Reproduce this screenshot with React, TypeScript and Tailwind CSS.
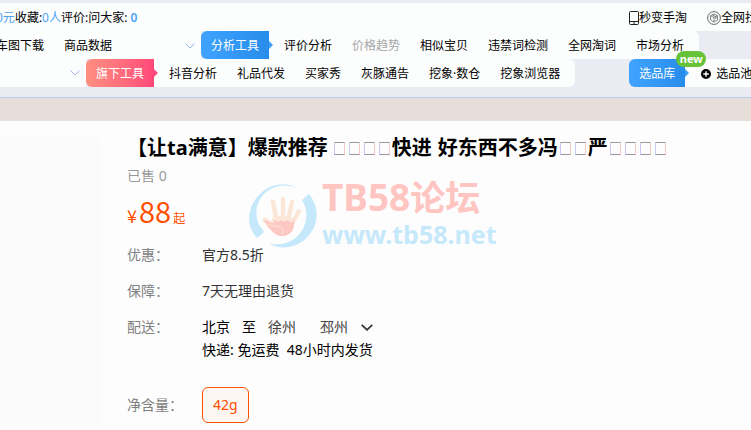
import type { ReactNode } from "react";

const analysisTools = [
  { label: "评价分析" },
  { label: "价格趋势", muted: true },
  { label: "相似宝贝" },
  { label: "违禁词检测" },
  { label: "全网淘词" },
  { label: "市场分析" },
];

const brandTools = [
  { label: "抖音分析" },
  { label: "礼品代发" },
  { label: "买家秀" },
  { label: "灰豚通告" },
  { label: "挖象·数仓" },
  { label: "挖象浏览器" },
];

type Tool = { label: string; muted?: boolean };

const ToolLinks = ({ items }: { items: Tool[] }) => (
  <nav className="flex h-7 shrink-0 items-center gap-5 rounded-r-md bg-[#fcfdfd] px-[15px] pt-[2px]">
    {items.map((item) => (
      <a
        key={item.label}
        href="#"
        className={item.muted ? "text-[#a6a6a6]" : "text-black"}
      >
        {item.label}
      </a>
    ))}
  </nav>
);

const Chevron = ({ className }: { className: string }) => (
  <svg viewBox="0 0 10 6" className={className} fill="none" stroke="currentColor">
    <path d="M0.5 0.7 L5 5 L9.5 0.7" />
  </svg>
);

const PhoneIcon = () => (
  <svg viewBox="0 0 10 14" className="h-[14px] w-[10px]" fill="none" stroke="#222">
    <rect x="0.5" y="0.5" width="9" height="13" rx="1" />
    <path d="M0.5 10.5 H9.5 M4 12 H6" />
  </svg>
);

const CubeIcon = () => (
  <svg viewBox="0 0 14 14" className="h-[14px] w-[14px]" fill="none" stroke="#555" strokeWidth="0.9">
    <circle cx="7" cy="7" r="6.4" />
    <path d="M7 3 L10.5 4.7 V9 L7 11 L3.5 9 V4.7 Z M3.5 4.7 L7 6.5 L10.5 4.7 M7 6.5 V11 M5.2 3.8 L8.8 5.6 V8" strokeWidth="0.7" />
  </svg>
);

const PlusIcon = () => (
  <svg viewBox="0 0 10 10" className="h-[10px] w-[10px]">
    <circle cx="5" cy="5" r="5" fill="#000" />
    <path d="M5 2.2 V7.8 M2.2 5 H7.8" stroke="#fff" strokeWidth="1.4" />
  </svg>
);

const HandLogo = () => (
  <svg viewBox="0 0 68 66" className="h-[66px] w-[68px] shrink-0">
    <path
      d="M50 6 C40 -1 24 -1 12 10 C-2 23 -4 42 8 55 L15 49 C14 46 9 43 8 35 C5 22 13 8 27 4 C36 1 43 3 50 6 Z"
      fill="#c5e8fb"
    />
    <path
      d="M60 11 C69 22 71 38 61 51 C52 64 34 68 20 61 C33 63 45 59 52 49 C58 40 60 28 53 17 Z"
      fill="#c5e8fb"
    />
    <g stroke="#fce6d8" strokeLinecap="round" fill="none">
      <path d="M28 39 L24 19" strokeWidth="4.4" />
      <path d="M34 37 L34 16" strokeWidth="4.4" />
      <path d="M39 38 L43 19" strokeWidth="4.4" />
      <path d="M43 41 L50 28" strokeWidth="4" />
      <path d="M22 42 L16 37" strokeWidth="5" />
    </g>
    <path
      d="M25 32 L45 35 C46 45 42 52 33 53 C26 53 22 48 20 43 Z"
      fill="#fce6d8"
    />
    <path
      d="M15 37 C19 37 22 41 25 40 L25 37 L29 39 L32 37 L35 39 L39 37 L42 40 L45 37 C46 46 43 52 34 53 C26 53 22 47 18 43 Z"
      fill="#fdc8c2"
    />
    <path d="M18 41 C25 44 35 42 34 48 L33 51" fill="none" stroke="#fce6d8" />
  </svg>
);

const Tofu = ({ count }: { count: number }) => (
  <span className="inline-flex gap-1 px-[2px]" aria-hidden="true">
    {Array(count)
      .fill("")
      .map((_, index) => (
        <span
          key={index}
          className="h-[13px] w-[11px] border border-y-[#999] border-l-[#c9c9f5] border-r-[#f5c9c9]"
        />
      ))}
  </span>
);

const Row = ({ label, children }: { label: string; children: ReactNode }) => (
  <div className="flex items-center">
    <dt className="w-[75px] shrink-0 text-[#808080]">{label}</dt>
    <dd>{children}</dd>
  </div>
);

const Toolbar = () => (
  <header className="border-b border-[#b5d3ee] bg-[#ebecf3] pt-[3px] pb-[10px] text-xs whitespace-nowrap">
    <div className="flex h-7 items-center bg-[#fcfdfd] pt-[2px]">
      <p className="-ml-1 w-[633px] shrink-0 text-black">
        <span className="text-[#4da3f5]">0元</span>收藏:
        <span className="text-[#4da3f5]">0人</span>评价:问大家:
        <span className="font-semibold text-[#4da3f5]"> 0</span>
      </p>
      <a href="#" className="flex shrink-0 items-center text-black">
        <PhoneIcon />
        秒变手淘
      </a>
      <a href="#" className="ml-5 flex shrink-0 items-center text-black">
        <CubeIcon />
        全网找
      </a>
    </div>

    <div className="flex h-7">
      <div className="flex w-[201px] shrink-0 items-center gap-5 bg-[#fcfdfd] pt-[2px]">
        <a href="#" className="-ml-1 text-black">车图下载</a>
        <a href="#" className="text-black">商品数据</a>
        <Chevron className="mr-[6px] ml-auto h-[6px] w-[10px] text-[#8ab4f0]" />
      </div>
      <div className="relative flex w-[68px] shrink-0 items-center justify-center rounded-l-md bg-linear-to-r from-[#3fa3ff] to-[#288ceb] pt-[2px] text-white">
        分析工具
        <span className="absolute top-[10px] left-full z-10 border-y-4 border-l-4 border-y-transparent border-l-[#3d9ff5]" />
      </div>
      <ToolLinks items={analysisTools} />
    </div>

    <div className="flex h-7">
      <div className="flex w-[86px] shrink-0 items-center justify-end bg-[#fcfdfd] pr-[6px]">
        <Chevron className="h-[6px] w-[10px] text-[#a9a9f5]" />
      </div>
      <div className="relative flex w-[68px] shrink-0 items-center justify-center rounded-l-md bg-linear-to-r from-[#ff8f80] to-[#ff4778] pt-[2px] text-white">
        旗下工具
        <span className="absolute top-[10px] left-full z-10 border-y-4 border-l-4 border-y-transparent border-l-[#ff4d80]" />
      </div>
      <ToolLinks items={brandTools} />
      <div className="relative ml-[54px] flex w-14 shrink-0 items-center justify-center rounded-l-md bg-linear-to-r from-[#3fa3ff] to-[#288ceb] pt-[2px] text-white">
        选品库
        <span className="absolute top-[10px] left-full z-10 border-y-4 border-l-4 border-y-transparent border-l-[#3d9ff5]" />
        <span className="absolute -top-2 left-[47px] z-10 flex h-4 w-[30px] items-center justify-center rounded-full bg-[#67c23a] text-[11px] font-bold">
          new
        </span>
      </div>
      <a href="#" className="flex flex-1 items-center gap-[5px] bg-[#fcfdfd] pt-[2px] pl-4 text-black">
        <PlusIcon />
        选品池
      </a>
    </div>
  </header>
);

const Watermark = () => (
  <div
    className="pointer-events-none absolute top-[43px] left-[122px] flex items-center gap-[5px] font-bold whitespace-nowrap"
    aria-hidden="true"
  >
    <HandLogo />
    <div>
      <p className="text-[37px] leading-9 text-[#fec5c1]">
        TB58<span className="text-[35px]">论坛</span>
      </p>
      <p className="text-[25px] leading-9 text-[#c5e8fb]">www.tb58.net</p>
    </div>
  </div>
);

const ProductInfo = () => (
  <section className="relative min-w-0 flex-1 text-sm">
    <Watermark />
    <h1 className="flex items-center text-xl leading-6 font-bold whitespace-nowrap text-black">
      【让ta满意】爆款推荐
      <span className="w-1" />
      <Tofu count={4} />
      快进
      <span className="w-[6px]" />
      好东西不多冯
      <Tofu count={2} />
      严
      <Tofu count={4} />
    </h1>
    <p className="mt-[6px] leading-5 text-[#999]">已售 0</p>
    <p className="mt-[6px] mb-[17px] flex h-9 items-baseline gap-[2px] font-['Noto_Sans_CJK_SC',sans-serif] text-[#ff5000]">
      <span className="text-lg leading-9">¥</span>
      <span className="text-[29px] leading-9">88</span>
      <span className="text-xs leading-9">起</span>
    </p>
    <dl className="flex flex-col gap-4 leading-5">
      <Row label="优惠：">
        <span className="text-[#333]">官方8.5折</span>
      </Row>
      <Row label="保障：">
        <span className="text-[#333]">7天无理由退货</span>
      </Row>
      <Row label="配送：">
        <div className="flex items-center gap-3 text-black">
          <span>北京</span>
          <span>至</span>
          <span className="mr-3 text-[#444]">徐州</span>
          <label className="relative flex items-center">
            <select
              aria-label="配送地区"
              className="w-[53px] appearance-none bg-transparent text-[#444] outline-none"
            >
              <option>邳州</option>
            </select>
            <Chevron className="pointer-events-none absolute right-0 h-[7px] w-3 stroke-[1.5] text-[#333]" />
          </label>
        </div>
      </Row>
    </dl>
    <p className="mt-[3px] ml-[75px] leading-5 whitespace-pre text-black">
      {"快递: 免运费  48小时内发货"}
    </p>
    <div className="mt-[27px] flex items-center">
      <span className="w-[75px] text-[#808080]">净含量：</span>
      <button
        type="button"
        className="h-9 rounded-md border border-[#ff5000] bg-[#fdf7f4] px-[10px] text-[#ff5000]"
      >
        42g
      </button>
    </div>
  </section>
);

const App = () => {
  return (
    <div className="min-h-screen overflow-hidden bg-[#fdfdfd] font-['Noto_Sans','Noto_Sans_CJK_SC',sans-serif]">
      <Toolbar />
      <div className="h-[23px] bg-[#e7deda]" />
      <main className="flex items-stretch pt-[15px]">
        <div className="mr-[25px] w-[102px] shrink-0 rounded-tr-lg bg-[#fbfbfb]" />
        <ProductInfo />
      </main>
    </div>
  );
};

export default App;
